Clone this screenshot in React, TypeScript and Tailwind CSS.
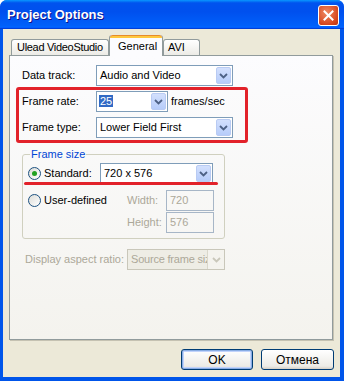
const Chevron = ({ color }: { color: string }) => (
  <svg width="9" height="6" viewBox="0 0 9 6">
    <path d="M1 1l3.5 3.5L8 1" fill="none" stroke={color} strokeWidth="1.8" />
  </svg>
);

const Combo = ({
  value,
  className,
  selected,
  disabled,
}: {
  value: string;
  className: string;
  selected?: boolean;
  disabled?: boolean;
}) => (
  <div
    className={`${className} h-[21px] flex items-center border ${
      disabled ? "border-[#C9C7BA] bg-[#EEEDE5]" : "border-[#7F9DB9] bg-white"
    }`}
  >
    <div className="flex-1 min-w-0 overflow-hidden whitespace-nowrap pl-[2px]">
      {selected ? (
        <span className="bg-[#316AC5] text-white px-[1px]">{value}</span>
      ) : (
        <span className={disabled ? "pl-px text-[#ACA899] tracking-[-0.2px]" : "pl-px"}>{value}</span>
      )}
    </div>
    {disabled ? (
      <div className="w-[17px] h-[19px] flex items-center justify-center border-l border-[#DAD8CB] bg-[#F4F3EE]">
        <Chevron color="#C9C7BA" />
      </div>
    ) : (
      <div className="w-[15px] h-[17px] mr-px flex items-center justify-center rounded-[2px] border border-[#B9CBF3] bg-[linear-gradient(180deg,#D3E0FD,#B6CCFA)]">
        <Chevron color="#4D6185" />
      </div>
    )}
  </div>
);

const Radio = ({ checked }: { checked?: boolean }) => (
  <span className="w-[13px] h-[13px] shrink-0 rounded-full border border-[#1C5180] bg-[linear-gradient(135deg,#DCDCD7,#FFFFFF)] flex items-center justify-center">
    {checked && <span className="w-[5px] h-[5px] rounded-full bg-[#21A121]" />}
  </span>
);

const TextBox = ({ value }: { value: string }) => (
  <div className="w-[48px] h-[21px] border border-[#A7B6C7] flex items-center pl-[3px] text-[#ACA899]">
    {value}
  </div>
);

const App = () => {
  return (
    <div className="w-[344px] h-[381px] bg-white">
      <div className="relative w-[344px] h-[381px] flex flex-col rounded-t-[7px] overflow-hidden bg-[#0055EA] font-['Liberation_Sans',Arial,sans-serif] text-[11px] text-black">
        {/* title bar */}
        <div className="h-[29px] shrink-0 flex items-start pl-[7px] pr-[5px] bg-[linear-gradient(180deg,#0997FF_0%,#0053EE_10%,#0050EE_40%,#0060FA_88%,#0066FF_93%,#005BFF_95%,#0040D8_97%,#0040D8_100%)]">
          <span className="flex-1 mt-[7px] text-white font-bold text-[13px] leading-[16px] [text-shadow:1px_1px_0_#0F1089]">
            Project Options
          </span>
          <div className="mt-[5px] w-[21px] h-[21px] rounded-[3px] border border-white bg-[radial-gradient(circle_at_40%_35%,#F08A63,#D6471F_70%,#B8330F)] flex items-center justify-center">
            <svg width="11" height="11" viewBox="0 0 11 11">
              <path d="M1.5 1.5l8 8M9.5 1.5l-8 8" stroke="white" strokeWidth="2" strokeLinecap="square" />
            </svg>
          </div>
        </div>

        {/* dialog body */}
        <div className="ml-[3px] mr-[4px] mb-[4px] flex-1 bg-[#ECE9D8] flex flex-col pl-[6px] pt-[6px]">
          <div className="ml-[2px] h-[20px] flex items-end">
            <div className="w-[98px] h-[16px] flex items-center pl-[5px] whitespace-nowrap tracking-[-0.3px] border border-b-0 border-[#919B9C] rounded-t-[3px] bg-[linear-gradient(180deg,#FFFFFF,#ECEBE6)]">
              Ulead VideoStudio
            </div>
            <div className="relative z-10 w-[54px] h-[21px] -mb-px flex flex-col border-x border-[#919B9C] rounded-t-[3px] bg-[#FCFCFE]">
              <div className="h-[3px] rounded-t-[3px] border-t border-[#E68B2C] bg-[#FFC83C]" />
              <div className="flex-1 flex items-center pl-[8px] pb-[1px]">General</div>
            </div>
            <div className="w-[37px] h-[16px] flex items-center pl-[4px] border border-b-0 border-[#919B9C] rounded-t-[3px] bg-[linear-gradient(180deg,#FFFFFF,#ECEBE6)]">
              AVI
            </div>
          </div>

          <div className="w-[324px] h-[285px] flex flex-col pl-[12px] border border-[#919B9C] bg-[linear-gradient(180deg,#FCFCFE,#F4F3EE)] shadow-[1px_1px_0_#C5C2B2]">
            <div className="mt-[9px] h-[21px] flex items-center">
              <span className="w-[74px]">Data track:</span>
              <Combo className="w-[137px]" value="Audio and Video" />
            </div>
            <div className="mt-[5px] h-[21px] flex items-center">
              <span className="w-[74px]">Frame rate:</span>
              <Combo className="w-[72px]" value="25" selected />
              <span className="ml-[3px]">frames/sec</span>
            </div>
            <div className="mt-[5px] h-[21px] flex items-center">
              <span className="w-[74px]">Frame type:</span>
              <Combo className="w-[137px]" value="Lower Field First" />
            </div>

            <fieldset className="mt-[10px] w-[203px] border border-[#D0D0BF] rounded-[3px] pl-[5px] pt-[2px] pb-[5px]">
              <legend className="ml-[2px] px-[1px] leading-[13px] text-[#0046D5]">Frame size</legend>
              <div className="h-[21px] flex items-center">
                <div className="w-[72px] flex items-center gap-[3px]">
                  <Radio checked />
                  <span>Standard:</span>
                </div>
                <Combo className="w-[113px]" value="720 x 576" />
              </div>
              <div className="mt-[6px] flex">
                <div className="w-[99px] h-[21px] flex items-center gap-[3px] whitespace-nowrap">
                  <Radio />
                  <span>User-defined</span>
                </div>
                <div className="flex flex-col gap-px text-[#ACA899]">
                  <div className="h-[21px] flex items-center">
                    <span className="w-[39px]">Width:</span>
                    <TextBox value="720" />
                  </div>
                  <div className="h-[21px] flex items-center">
                    <span className="w-[39px]">Height:</span>
                    <TextBox value="576" />
                  </div>
                </div>
              </div>
            </fieldset>

            <div className="ml-[3px] mt-[10px] h-[21px] flex items-center">
              <span className="w-[102px] text-[#ACA899]">Display aspect ratio:</span>
              <Combo className="w-[98px]" value="Source frame size" disabled />
            </div>
          </div>

          <div className="mt-[9px] w-[325px] flex justify-end gap-[8px] text-[12px]">
            <button className="w-[72px] h-[21px] rounded-[3px] border border-[#003C74] bg-[linear-gradient(180deg,#FFFFFF,#ECEBE6_85%,#D6D0C5)] shadow-[inset_0_0_0_1px_#89ADE4,inset_0_0_0_2px_#C1D3FB]">
              OK
            </button>
            <button className="w-[73px] h-[21px] rounded-[3px] border border-[#003C74] bg-[linear-gradient(180deg,#FFFFFF,#ECEBE6_85%,#D6D0C5)]">
              Отмена
            </button>
          </div>
        </div>

        {/* red annotations */}
        <div className="absolute left-[16px] top-[87px] w-[232px] h-[56px] border-[3px] border-[#E2222A] rounded-[3px]" />
        <div className="absolute left-[24px] top-[182px] w-[194px] h-[3px] rounded-full bg-[#E2222A]" />
      </div>
    </div>
  );
};

export default App;
